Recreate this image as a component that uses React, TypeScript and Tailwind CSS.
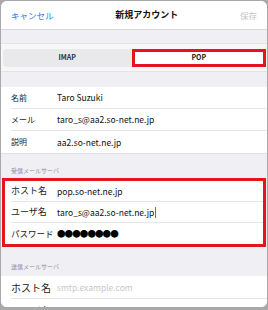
import React from "react";

const font = { fontFamily: '"Noto Sans CJK JP", "Noto Sans", "Liberation Sans", sans-serif' };

function Row({ label, value, valueClass = "text-[#111]", labelClass = "text-[8px]", h = "h-[22px]", pl = "pl-[10px]", last = false, children }: { label: string; value?: string; valueClass?: string; labelClass?: string; h?: string; pl?: string; last?: boolean; children?: React.ReactNode }) {
  return (
    <div className={`flex ${h} items-center bg-white ${pl}`}>
      <div className={`flex h-full flex-1 items-center ${last ? "" : "border-b border-[#e6e6e9]"}`}>
        <span className={`w-[46px] shrink-0 whitespace-nowrap ${labelClass} text-[#222]`}>{label}</span>
        {children ?? <span className={`text-[8.5px] ${valueClass}`}>{value}</span>}
      </div>
    </div>
  );
}

export default function App() {
  return (
    <div style={font} className="h-[310px] w-[268px] overflow-hidden bg-[#a9a9a9] px-[1px] pb-[3px] pt-[1px]">
      <div className="flex h-full w-full flex-col overflow-hidden rounded-[6px] bg-[#efeff4]">
        {/* header */}
        <div className="flex h-[29px] shrink-0 items-center justify-between border-b border-[#d8d8dc] bg-white px-[10px]">
          <span className="text-[8.5px] text-[#2d7cf6]">キャンセル</span>
          <span className="text-[9px] font-bold text-[#111]">新規アカウント</span>
          <span className="text-[8.5px] text-[#c4c4c6]">保存</span>
        </div>
        <div className="h-[13px] shrink-0 bg-[#efeff4]" />
        {/* segmented */}
        <div className="flex h-[29px] shrink-0 items-center border-y border-[#e4e4e8] bg-[#f7f7f8] pl-[2px] pr-[1px]">
          <div className="flex h-[18px] w-full rounded-[4px] bg-[#e9e9eb]">
            <div className="flex flex-1 items-center justify-center text-[7px] font-semibold text-[#333]">IMAP</div>
            <div className="flex flex-1 items-center justify-center border-[3px] border-[#e3161f] bg-white text-[7px] font-semibold text-[#222]">POP</div>
          </div>
        </div>
        <div className="h-[15px] shrink-0" />
        <div className="border-b border-[#e0e0e4]">
          <Row label="名前" value="Taro Suzuki" />
          <Row label="メール" value="taro_s@aa2.so-net.ne.jp" />
          <Row label="説明" value="aa2.so-net.ne.jp" last />
        </div>
        <div className="flex h-[24px] shrink-0 items-end pb-[3px] pl-[10px] text-[6px] text-[#8e8e93]">受信メールサーバ</div>
        <div className="mx-[1px] border-[3px] border-[#e3161f] bg-white">
          <Row label="ホスト名" value="pop.so-net.ne.jp" labelClass="text-[9px]" h="h-[21px]" pl="pl-[6px]" />
          <Row label="ユーザ名" labelClass="text-[9px]" h="h-[21px]" pl="pl-[6px]">
            <span className="flex items-center text-[8.5px] text-[#111]">
              taro_s@aa2.so-net.ne.jp
              <span className="ml-[1px] inline-block h-[11px] w-[1px] bg-[#2d7cf6]" />
            </span>
          </Row>
          <Row label="パスワード" labelClass="text-[8.5px]" h="h-[21px]" pl="pl-[6px]" last>
            <span className="text-[8.5px] tracking-[-0.9px] text-black">●●●●●●●●</span>
          </Row>
        </div>
        <div className="flex h-[29px] shrink-0 items-end pb-[5px] pl-[10px] text-[6px] text-[#8e8e93]">送信メールサーバ</div>
        <div className="bg-white">
          <Row label="ホスト名" value="smtp.example.com" valueClass="text-[#c7c7cc]" labelClass="text-[10px]" h="h-[23px]" />
          <Row label="ユーザ名" value="オプション" valueClass="text-[#c7c7cc]" labelClass="text-[10px]" h="h-[23px]" last />
        </div>
      </div>
    </div>
  );
}
